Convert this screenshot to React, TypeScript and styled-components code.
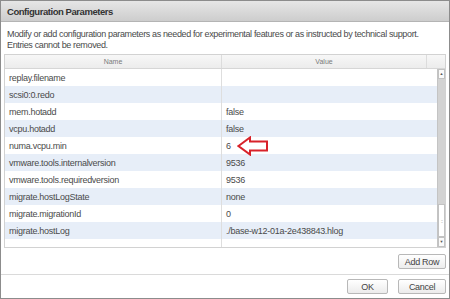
import React from 'react'
import styled, { createGlobalStyle } from 'styled-components'

const GlobalStyle = createGlobalStyle`
  html, body {
    margin: 0;
    padding: 0;
    background: #ffffff;
  }
  body {
    font-family: 'Liberation Sans', Arial, sans-serif;
    color: #444;
  }
`

const Dialog = styled.div`
  width: 450px;
  height: 299px;
  box-sizing: border-box;
  border: 1px solid #8c8c8c;
  display: flex;
  flex-direction: column;
  background: #fff;
  overflow: hidden;
`

const TitleBar = styled.div`
  height: 20px;
  flex: 0 0 auto;
  display: flex;
  align-items: center;
  padding-left: 6px;
  background: linear-gradient(#e6e6e6, #cdcdcd);
  border-bottom: 1px solid #b4b4b4;
  font-size: 9.5px;
  font-weight: bold;
  letter-spacing: -0.45px;
  color: #333;
`

const Description = styled.p`
  margin: 0;
  padding: 7px 6px 0 6px;
  font-size: 9px;
  line-height: 10.5px;
  letter-spacing: -0.36px;
  color: #4a4a4a;
  height: 25px;
`

const Table = styled.div`
  margin: 0 3px 0 3px;
  border: 1px solid #d2d2d2;
  display: flex;
  flex-direction: column;
`

const HeaderRow = styled.div`
  display: grid;
  grid-template-columns: 217px 205px 1fr;
  height: 13px;
  background: linear-gradient(#f7f7f7, #ececec);
  border-bottom: 1px solid #d6d6d6;
`

const HeaderCell = styled.div<{ $last?: boolean }>`
  display: flex;
  align-items: center;
  justify-content: center;
  font-size: 7px;
  color: #7a7a7a;
  border-right: ${p => (p.$last ? 'none' : '1px solid #dcdcdc')};
`

const BodyArea = styled.div`
  display: flex;
  height: 178px;
  position: relative;
`

const Rows = styled.div`
  flex: 1;
  display: flex;
  flex-direction: column;
  overflow: hidden;
`

const Row = styled.div<{ $alt: boolean }>`
  display: grid;
  grid-template-columns: 217px 1fr;
  height: 17px;
  flex: 0 0 17px;
  background: ${p => (p.$alt ? '#e7eef8' : '#ffffff')};
  font-size: 9px;
  letter-spacing: -0.27px;
  color: #4a4a4a;
`

const FillerRow = styled(Row)`
  flex: 1 1 auto;
  height: auto;
`

const Cell = styled.div<{ $divider?: boolean }>`
  position: relative;
  display: flex;
  align-items: center;
  padding-left: 4px;
  white-space: nowrap;
  border-right: ${p => (p.$divider ? '1px solid #dedede' : 'none')};
`

const Callout = styled.svg`
  position: absolute;
  left: 15px;
  top: -1px;
`

const ScrollBar = styled.div`
  width: 7px;
  flex: 0 0 7px;
  display: flex;
  flex-direction: column;
  background: #d3d3d3;
  border-left: 1px solid #c4c4c4;
`

const ScrollBtn = styled.div`
  height: 10px;
  flex: 0 0 10px;
  background: #fafafa;
  border: 1px solid #c2c2c2;
  box-sizing: border-box;
  display: flex;
  align-items: center;
  justify-content: center;
  font-size: 4px;
  color: #555;
  line-height: 1;
`

const Track = styled.div`
  flex: 1;
`

const Thumb = styled.div`
  height: 33px;
  flex: 0 0 33px;
  background: #ffffff;
  border: 1px solid #c2c2c2;
  box-sizing: border-box;
  display: flex;
  align-items: center;
  justify-content: center;
  font-size: 6px;
  color: #999;
  letter-spacing: -1px;
`

const ActionBar = styled.div<{ $separated?: boolean }>`
  display: flex;
  justify-content: flex-end;
  gap: 10px;
  padding: ${p => (p.$separated ? '4px 3px 0 3px' : '6px 3px 5px 3px')};
  border-top: ${p => (p.$separated ? '1px solid #dadada' : 'none')};
`

const Button = styled.button<{ $w: number }>`
  width: ${p => p.$w}px;
  height: 15px;
  padding: 0;
  font-family: 'Liberation Sans', Arial, sans-serif;
  font-size: 9px;
  letter-spacing: -0.3px;
  color: #444;
  background: linear-gradient(#ffffff, #ececec);
  border: 1px solid #b8b8b8;
  border-radius: 2px;
`

const params: [string, string][] = [
  ['replay.filename', ''],
  ['scsi0:0.redo', ''],
  ['mem.hotadd', 'false'],
  ['vcpu.hotadd', 'false'],
  ['numa.vcpu.min', '6'],
  ['vmware.tools.internalversion', '9536'],
  ['vmware.tools.requiredversion', '9536'],
  ['migrate.hostLogState', 'none'],
  ['migrate.migrationId', '0'],
  ['migrate.hostLog', './base-w12-01a-2e438843.hlog'],
]

export default function App() {
  return (
    <>
      <GlobalStyle />
      <Dialog>
        <TitleBar>Configuration Parameters</TitleBar>
        <Description>
          Modify or add configuration parameters as needed for experimental features or as instructed by technical support.
          <br />
          Entries cannot be removed.
        </Description>
        <Table>
          <HeaderRow>
            <HeaderCell>Name</HeaderCell>
            <HeaderCell>Value</HeaderCell>
            <HeaderCell $last />
          </HeaderRow>
          <BodyArea>
            <Rows>
              {params.map(([name, value], i) => (
                <Row key={name} $alt={i % 2 === 1}>
                  <Cell $divider>{name}</Cell>
                  <Cell>
                    {value}
                    {name === 'numa.vcpu.min' && (
                      <Callout width="32" height="20" viewBox="0 0 32 20">
                        <polygon
                          points="1.5,10 13,1.5 13,5.5 30,5.5 30,14.5 13,14.5 13,18.5"
                          fill="#ffffff"
                          stroke="#d8222a"
                          strokeWidth="2"
                          strokeLinejoin="miter"
                        />
                      </Callout>
                    )}
                  </Cell>
                </Row>
              ))}
              <FillerRow $alt={false}>
                <Cell $divider />
                <Cell />
              </FillerRow>
            </Rows>
            <ScrollBar>
              <ScrollBtn>▲</ScrollBtn>
              <Track />
              <Thumb>::</Thumb>
              <ScrollBtn>▼</ScrollBtn>
            </ScrollBar>
          </BodyArea>
        </Table>
        <ActionBar>
          <Button $w={48}>Add Row</Button>
        </ActionBar>
        <ActionBar $separated>
          <Button $w={41}>OK</Button>
          <Button $w={48}>Cancel</Button>
        </ActionBar>
      </Dialog>
    </>
  )
}
